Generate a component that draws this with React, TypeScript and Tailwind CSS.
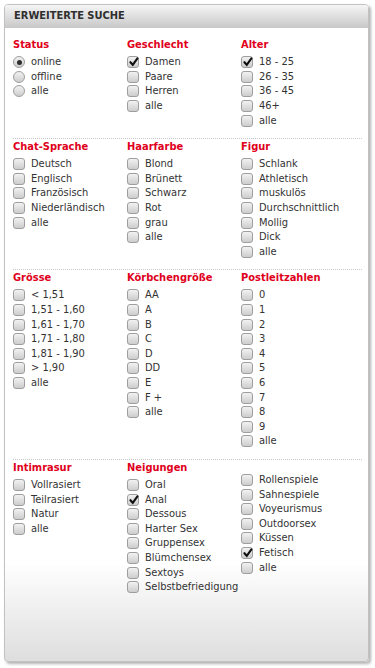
import React from "react";

type Item = { label: string; checked?: boolean };
type Group = { title?: string; items: Item[]; radio?: boolean; offset?: boolean };

const labels = (list: string[], checked: string[] = []): Item[] =>
  list.map((label) => ({ label, checked: checked.includes(label) }));

const sections: Group[][] = [
  [
    { title: "Status", radio: true, items: labels(["online", "offline", "alle"], ["online"]) },
    { title: "Geschlecht", items: labels(["Damen", "Paare", "Herren", "alle"], ["Damen"]) },
    { title: "Alter", items: labels(["18 - 25", "26 - 35", "36 - 45", "46+", "alle"], ["18 - 25"]) },
  ],
  [
    { title: "Chat-Sprache", items: labels(["Deutsch", "Englisch", "Französisch", "Niederländisch", "alle"]) },
    { title: "Haarfarbe", items: labels(["Blond", "Brünett", "Schwarz", "Rot", "grau", "alle"]) },
    {
      title: "Figur",
      items: labels(["Schlank", "Athletisch", "muskulös", "Durchschnittlich", "Mollig", "Dick", "alle"]),
    },
  ],
  [
    {
      title: "Grösse",
      items: labels(["< 1,51", "1,51 - 1,60", "1,61 - 1,70", "1,71 - 1,80", "1,81 - 1,90", "> 1,90", "alle"]),
    },
    { title: "Körbchengröße", items: labels(["AA", "A", "B", "C", "D", "DD", "E", "F +", "alle"]) },
    { title: "Postleitzahlen", items: labels(["0", "1", "2", "3", "4", "5", "6", "7", "8", "9", "alle"]) },
  ],
  [
    { title: "Intimrasur", items: labels(["Vollrasiert", "Teilrasiert", "Natur", "alle"]) },
    {
      title: "Neigungen",
      items: labels(
        ["Oral", "Anal", "Dessous", "Harter Sex", "Gruppensex", "Blümchensex", "Sextoys", "Selbstbefriedigung"],
        ["Anal"],
      ),
    },
    {
      offset: true,
      items: labels(
        ["Rollenspiele", "Sahnespiele", "Voyeurismus", "Outdoorsex", "Küssen", "Fetisch", "alle"],
        ["Fetisch"],
      ),
    },
  ],
];

function Box({ checked, radio }: { checked?: boolean; radio?: boolean }) {
  return (
    <span
      className={`relative flex h-[12px] w-[12px] shrink-0 items-center justify-center border border-[#9e9e9e] bg-gradient-to-b from-[#f2f2f2] to-[#cdcdcd] ${
        radio ? "rounded-full" : "rounded-[3px]"
      }`}
    >
      {checked && radio && <span className="h-[5px] w-[5px] rounded-full bg-[#2e2e2e]" />}
      {checked && !radio && (
        <svg viewBox="0 0 12 12" className="absolute left-[0px] top-[-1px] h-[12px] w-[12px]">
          <path d="M2.4 6.2 L4.8 8.8 L9.4 2.4" fill="none" stroke="#111" strokeWidth="2.1" strokeLinecap="round" />
        </svg>
      )}
    </span>
  );
}

function Column({ group }: { group: Group }) {
  return (
    <div className="flex flex-col">
      {group.title ? (
        <div className="mb-[3px] h-[14px] text-[11px] font-bold leading-[14px] text-[#e0001b]">{group.title}</div>
      ) : (
        <div className={group.offset ? "h-[12px]" : "h-[17px]"} />
      )}
      {group.items.map((item) => (
        <div key={item.label} className="flex h-[14.6px] items-center gap-[6px] whitespace-nowrap">
          <Box checked={item.checked} radio={group.radio} />
          <span className="text-[11px] leading-[14px] text-[#333333]">{item.label}</span>
        </div>
      ))}
    </div>
  );
}

export default function App() {
  return (
    <div
      className="min-h-[668px] bg-white pl-[4px] pt-[4px]"
      style={{ fontFamily: '"DejaVu Sans Condensed", "DejaVu Sans", Tahoma, sans-serif', fontStretch: "condensed" }}
    >
      <div className="h-[658px] w-[365px] overflow-hidden rounded-[4px] border border-[#c2c2c2] bg-gradient-to-b from-white via-white via-[85%] to-[#dedede] shadow-[2px_2px_3px_rgba(0,0,0,0.3)]">
        <div className="flex h-[23px] items-center bg-gradient-to-b from-[#f5f5f5] to-[#c8c8c8] pl-[9px] text-[11px] font-bold text-[#2f2f2f]">
          ERWEITERTE SUCHE
        </div>
        <div className="pl-[8px] pr-[6px] pt-[10px]">
          {sections.map((row, i) => (
            <div
              key={i}
              className={`grid grid-cols-[114px_114px_1fr] pb-[10px] ${
                i > 0 ? "border-t border-dotted border-[#c8c8c8] pt-[1px]" : ""
              }`}
            >
              {row.map((group, j) => (
                <Column key={j} group={group} />
              ))}
            </div>
          ))}
        </div>
      </div>
    </div>
  );
}
